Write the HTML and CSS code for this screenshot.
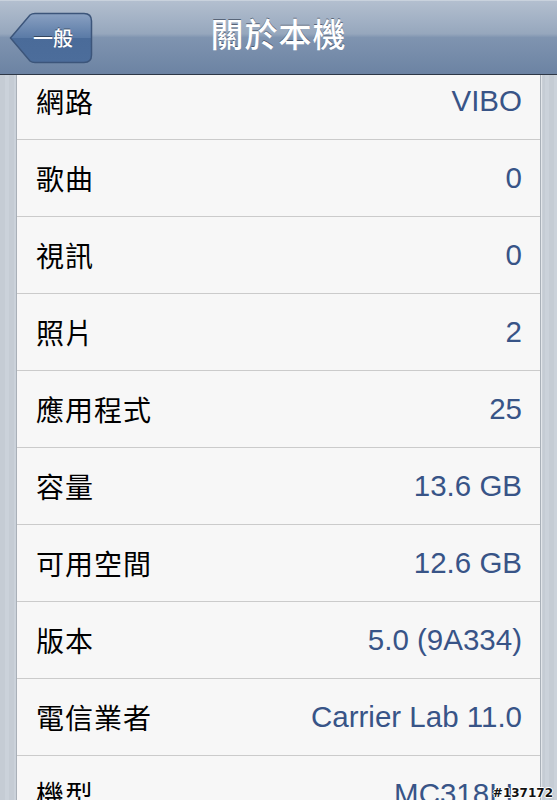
FILE: index.html
```html
<!DOCTYPE html>
<html lang="zh-Hant">
<head>
    <meta charset="UTF-8">
    <meta name="viewport" content="width=device-width, initial-scale=1.0">
    <title>關於本機</title>
    <link rel="stylesheet" href="styles.css">
</head>
<body>
    <div class="nav-bar">
        <div class="back-button">
            <svg class="back-shape" width="84" height="52" viewBox="0 0 84 52">
                <defs>
                    <linearGradient id="backGrad" x1="0" y1="0" x2="0" y2="1">
                        <stop offset="0" stop-color="#8aa1c2"/>
                        <stop offset="0.5" stop-color="#5a7aa6"/>
                        <stop offset="0.5" stop-color="#4a6b99"/>
                        <stop offset="1" stop-color="#4c6d9b"/>
                    </linearGradient>
                </defs>
                <path d="M1.5 26 L21 3 Q23 1.5 26 1.5 L75 1.5 Q82.5 1.5 82.5 9 L82.5 43 Q82.5 50.5 75 50.5 L26 50.5 Q23 50.5 21 49 Z" fill="url(#backGrad)" stroke="#3c557a" stroke-width="1.5"/>
            </svg>
            <span class="back-label">一般</span>
        </div>
        <h1 class="nav-title">關於本機</h1>
    </div>

    <div class="page">
        <ul class="info-list">
            <li><span class="label">網路</span><span class="value">VIBO</span></li>
            <li><span class="label">歌曲</span><span class="value">0</span></li>
            <li><span class="label">視訊</span><span class="value">0</span></li>
            <li><span class="label">照片</span><span class="value">2</span></li>
            <li><span class="label">應用程式</span><span class="value">25</span></li>
            <li><span class="label">容量</span><span class="value">13.6 GB</span></li>
            <li><span class="label">可用空間</span><span class="value">12.6 GB</span></li>
            <li><span class="label">版本</span><span class="value">5.0 (9A334)</span></li>
            <li><span class="label">電信業者</span><span class="value">Carrier Lab 11.0</span></li>
            <li><span class="label">機型</span><span class="value">MC318LL</span></li>
        </ul>
    </div>

    <div class="watermark">#137172</div>
</body>
</html>
```

FILE: styles.css
```css
/* General */
body {
    margin: 0;
    padding: 0;
    width: 557px;
    height: 800px;
    overflow: hidden;
    font-family: "Liberation Sans", "Noto Sans CJK TC", sans-serif;
    background-color: #c7cdd5;
    position: relative;
}

/* Nav bar */
.nav-bar {
    position: relative;
    z-index: 2;
    height: 73px;
    background: linear-gradient(to bottom, #b3bfcf 0%, #96a7bd 45%, #7f94b0 50%, #6c83a3 100%);
    border-top: 1px solid #c9d2dd;
    border-bottom: 1px solid #2d3746;
    display: flex;
    align-items: center;
    justify-content: center;
}

.back-button {
    position: absolute;
    left: 9px;
    top: 11px;
    width: 84px;
    height: 52px;
}

.back-shape {
    display: block;
}

.back-label {
    position: absolute;
    left: 15px;
    top: 0;
    width: 58px;
    height: 50px;
    display: flex;
    align-items: center;
    justify-content: center;
    color: #fff;
    font-family: "Noto Sans CJK TC", sans-serif;
    font-size: 20px;
    font-weight: 500;
    text-shadow: 0 -1px 0 rgba(0, 0, 0, 0.45);
}

.nav-title {
    margin: 0 0 9px 0;
    color: #fff;
    font-family: "Noto Sans CJK TC", sans-serif;
    font-size: 33px;
    font-weight: 500;
    letter-spacing: 1px;
    text-shadow: 0 -1px 0 rgba(40, 50, 70, 0.6);
}

/* Page body */
.page {
    background: repeating-linear-gradient(to right, #c5ccd4 0px, #c5ccd4 5px, #cbd2da 5px, #cbd2da 9px);
    padding: 0 16px 0 16px;
    margin-top: -12px;
}

.info-list {
    list-style: none;
    margin: 0;
    padding: 0;
    background-color: #f7f7f7;
    border-left: 1px solid #a9b0b8;
    border-right: 1px solid #a9b0b8;
    box-shadow: 1px 0 1px rgba(255, 255, 255, 0.5);
}

.info-list li {
    height: 76px;
    border-bottom: 1px solid #cbcbcb;
    display: flex;
    align-items: center;
    justify-content: space-between;
    padding: 0 18px 0 19px;
}

.label {
    color: #000;
    font-family: "Noto Sans CJK TC", sans-serif;
    font-size: 28px;
    font-weight: 400;
    letter-spacing: 1px;
}

.value {
    color: #385487;
    font-size: 29.5px;
}

/* Watermark */
.watermark {
    position: absolute;
    right: 4px;
    bottom: 0;
    font-family: "DejaVu Sans", sans-serif;
    font-size: 12px;
    font-weight: bold;
    color: #111;
    text-shadow: 1px 0 0 #fff, -1px 0 0 #fff, 0 1px 0 #fff, 0 -1px 0 #fff;
    z-index: 3;
}
```
